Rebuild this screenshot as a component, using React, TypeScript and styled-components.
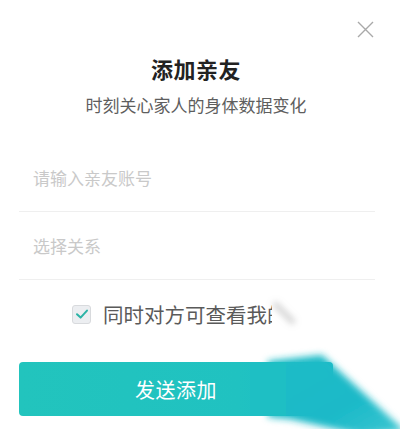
import React from "react";
import styled, { createGlobalStyle } from "styled-components";

const Global = createGlobalStyle`
  html, body { margin: 0; padding: 0; background: #fff; }
  body { font-family: "Noto Sans CJK SC", "Noto Sans", sans-serif; }
  * { box-sizing: border-box; }
`;

const Dialog = styled.div`
  position: relative;
  width: 400px;
  height: 429px;
  overflow: hidden;
  background: #fff;
  display: flex;
  flex-direction: column;
  padding: 0 19px;
`;

const Close = styled.button`
  position: absolute;
  top: 21px;
  right: 26px;
  width: 17px;
  height: 17px;
  padding: 0;
  border: 0;
  background: none;
  display: flex;
`;

const Title = styled.h1`
  margin: 53px 0 0;
  font-size: 22px;
  line-height: 30px;
  font-weight: 700;
  color: #222;
  text-align: center;
  letter-spacing: 0.5px;
  padding-right: 8px;
`;

const Subtitle = styled.p`
  margin: 10px 0 0;
  font-size: 17px;
  line-height: 24px;
  color: #5e5e5e;
  text-align: center;
  padding-right: 8px;
`;

const Field = styled.div<{ $first?: boolean }>`
  margin: ${(p) => (p.$first ? "27px" : "0")} 6px 0 0;
  height: 68px;
  border-bottom: 1px solid #efefef;
  display: flex;
  align-items: center;
  padding-left: 14px;
`;

const Input = styled.input`
  border: 0;
  outline: none;
  width: 100%;
  font-family: inherit;
  font-size: 17px;
  color: #333;
  background: transparent;
  padding: 0;
  &::placeholder { color: #c9c9c9; }
`;

const CheckRow = styled.label`
  margin-top: 22px;
  height: 24px;
  display: flex;
  align-items: center;
  padding-left: 53px;
  gap: 12px;
  font-size: 20.5px;
  color: #5a5a5a;
  white-space: nowrap;
`;

const Box = styled.span`
  width: 19px;
  height: 19px;
  border: 1px solid #d8dadd;
  border-radius: 3px;
  background: #eceef1;
  display: flex;
  align-items: center;
  justify-content: center;
  flex: none;
`;

const SendButton = styled.button`
  margin-top: 36px;
  width: 314px;
  height: 54px;
  border: 0;
  border-radius: 4px;
  background: linear-gradient(90deg, #22c4bd 0%, #20c2c1 70%, #1cbcc8 100%);
  color: #fff;
  font-family: inherit;
  font-size: 20px;
  letter-spacing: 0.5px;
  display: flex;
  align-items: center;
  justify-content: center;
`;

const WhiteSwash = styled.svg`
  position: absolute;
  left: 262px;
  top: 290px;
  width: 138px;
  height: 60px;
`;

const TealSmear = styled.svg`
  position: absolute;
  left: 250px;
  top: 345px;
  width: 150px;
  height: 84px;
`;

export default function App() {
  return (
    <>
      <Global />
      <Dialog>
        <Close aria-label="close">
          <svg width="17" height="17" viewBox="0 0 17 17">
            <path d="M1 1 L16 16 M16 1 L1 16" stroke="#a9a9a9" strokeWidth="1.4" fill="none" />
          </svg>
        </Close>
        <Title>添加亲友</Title>
        <Subtitle>时刻关心家人的身体数据变化</Subtitle>
        <Field $first>
          <Input placeholder="请输入亲友账号" />
        </Field>
        <Field>
          <Input placeholder="选择关系" />
        </Field>
        <CheckRow>
          <Box>
            <svg width="14" height="14" viewBox="0 0 14 14">
              <path d="M2 7.2 L5.6 10.6 L12 3.6" stroke="#2bb3a6" strokeWidth="2" fill="none" strokeLinecap="round" strokeLinejoin="round" />
            </svg>
          </Box>
          同时对方可查看我的数据
        </CheckRow>
        <SendButton>发送添加</SendButton>
        <WhiteSwash viewBox="0 0 138 60">
          <defs>
            <filter id="sb" x="-50%" y="-50%" width="200%" height="200%">
              <feGaussianBlur stdDeviation="3" />
            </filter>
          </defs>
          <rect x="10" y="0" width="128" height="60" fill="#fff" />
          <path d="M12 13 L32 33" stroke="#a0a0a0" strokeWidth="6" strokeOpacity="0.45" filter="url(#sb)" />
        </WhiteSwash>
        <TealSmear viewBox="0 0 150 84">
          <defs>
            <filter id="bl" x="-20%" y="-20%" width="140%" height="140%">
              <feGaussianBlur stdDeviation="3.5" />
            </filter>
            <linearGradient id="tg" x1="0" y1="0" x2="1" y2="1">
              <stop offset="0" stopColor="#1cbcc6" />
              <stop offset="0.6" stopColor="#1ab9c8" />
              <stop offset="1" stopColor="#3fc7d2" />
            </linearGradient>
          </defs>
          <polygon points="18,16 72,10 155,86 112,90 40,74 18,72" fill="url(#tg)" filter="url(#bl)" />
          <rect x="0" y="17" width="36" height="54" fill="#1ebfc4" />
        </TealSmear>
      </Dialog>
    </>
  );
}
